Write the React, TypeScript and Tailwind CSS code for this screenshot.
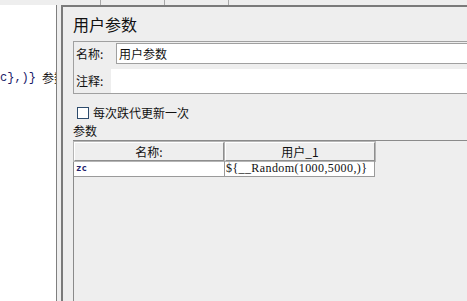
const cjk = { fontFamily: '"Noto Sans CJK SC", "Noto Sans", sans-serif' };

export default function App() {
  return (
    <div
      className="w-[467px] h-[301px] overflow-hidden bg-[#eeeeee] flex flex-col text-[#111111]"
      style={cjk}
    >
      {/* tab strip remnants */}
      <div className="h-[5px] shrink-0 flex">
        <div className="w-[101px] border-r border-[#a8a8a8]" />
        <div className="w-[64px] border-r border-[#a8a8a8]" />
        <div className="w-[64px] border-r border-[#a8a8a8]" />
      </div>

      <div className="flex flex-1 min-h-0">
        {/* tree panel */}
        <div className="w-[57px] shrink-0 bg-white border-r border-[#7f7f7f] overflow-hidden">
          <div className="mt-[66px] flex items-center whitespace-nowrap text-[12px] leading-[14px]">
            <span className="text-[#1b1b6a]" style={{ fontFamily: '"Liberation Mono", monospace' }}>
              {'c},)}'}
            </span>
            <span className="ml-[6px]">参数</span>
          </div>
        </div>
        <div className="w-[4px] shrink-0" />

        {/* editor panel */}
        <div className="flex-1 min-w-0 border-l-2 border-t-2 border-[#7a7a7a] pl-[10px] pt-[9px] overflow-hidden">
          <div className="text-[16px] leading-[16px]">用户参数</div>

          <div className="mt-[9px] w-[450px] border border-[#a0a0a0] pt-[1px] pl-[2px]">
            <div className="flex h-[21px]">
              <div className="w-[40px] text-[12px] leading-[21px]">名称:</div>
              <div className="flex-1 bg-white border border-[#a0a0a0] text-[12px] leading-[19px] pl-[2px]">
                用户参数
              </div>
            </div>
            <div className="flex h-[24px] mt-[5px]">
              <div className="w-[35px] text-[12px] leading-[24px]">注释:</div>
              <div className="flex-1 bg-white" />
            </div>
          </div>

          <div className="mt-[12px] ml-[4px] flex items-center gap-[4px]">
            <div className="w-[12px] h-[12px] bg-white border border-[#2e4c6d]" />
            <span className="text-[12px] leading-[14px]">每次跌代更新一次</span>
          </div>

          <div className="mt-[4px] text-[12px] leading-[14px]">参数</div>

          <div className="mt-[2px] h-[200px] border-t border-l border-[#8a8a8a] pt-[1px]">
            <div className="flex w-[301px]">
              <div className="w-[150px] h-[19px] border-t border-l border-white border-r border-b border-r-[#8e8e8e] border-b-[#8e8e8e] outline outline-1 outline-[#b5b5b5] text-center text-[12px] leading-[17px]">
                名称:
              </div>
              <div className="w-[150px] ml-[1px] h-[19px] border-t border-l border-white border-r border-b border-r-[#8e8e8e] border-b-[#8e8e8e] outline outline-1 outline-[#b5b5b5] text-center text-[12px] leading-[17px]">
                用户_1
              </div>
            </div>
            <div className="flex w-[301px] h-[16px] bg-white border-b border-[#9a9a9a]">
              <div
                className="w-[151px] border-r border-[#9a9a9a] pl-[2px] text-[9px] leading-[15px] font-bold text-[#23236b]"
                style={{ fontFamily: '"DejaVu Sans Mono", monospace' }}
              >
                zc
              </div>
              <div
                className="w-[150px] border-r border-[#9a9a9a] pl-[1px] text-[12px] leading-[15px] tracking-[0.4px] whitespace-nowrap"
                style={{ fontFamily: '"Liberation Serif", serif' }}
              >
                {'${__Random(1000,5000,)}'}
              </div>
            </div>
          </div>
        </div>
      </div>
    </div>
  );
}
